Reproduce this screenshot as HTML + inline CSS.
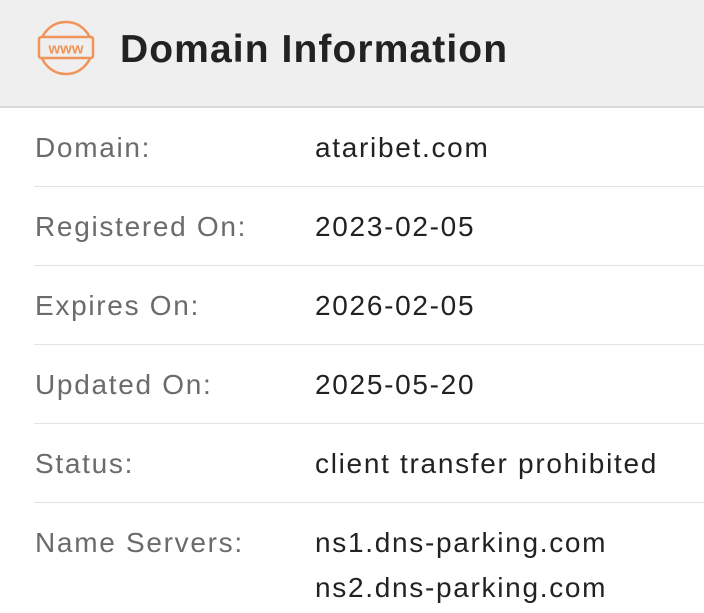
<!DOCTYPE html>
<html><head><style>
body{margin:0;width:704px;height:610px;overflow:hidden;background:#fff;font-family:"Liberation Sans",sans-serif;}
.hd{position:absolute;left:0;top:0;width:704px;height:106px;background:#efefef;border-bottom:2px solid #d9d9d9;}
.hd h1{position:absolute;left:120px;top:28px;margin:0;font-size:39px;font-weight:bold;color:#222;letter-spacing:1.1px;}
.row{position:absolute;left:34px;right:0;height:78px;border-bottom:1.5px solid #e3e3e3;font-size:28px;letter-spacing:1.7px;}
.row .l{position:absolute;left:1px;top:23px;color:#6b6b6b;line-height:34px;}
.row .v{position:absolute;left:281px;top:23px;color:#222;line-height:34px;}
.row .v2{line-height:45px;top:17px;}
</style></head><body>
<div class="hd">
<svg style="position:absolute;left:36px;top:19px" width="60" height="58" viewBox="0 0 60 58">
<g fill="none" stroke="#f0945a" stroke-width="2.5">
<circle cx="30" cy="29" r="26"/>
<rect x="3" y="18" width="54" height="21" rx="2" fill="#efefef"/>
</g>
<text x="30" y="34.5" font-family="Liberation Sans" font-weight="bold" font-size="15" fill="#f0945a" text-anchor="middle">www</text>
</svg>
<h1>Domain Information</h1>
</div>
<div class="row" style="top:108px"><span class="l">Domain:</span><span class="v">ataribet.com</span></div>
<div class="row" style="top:187px"><span class="l">Registered On:</span><span class="v">2023-02-05</span></div>
<div class="row" style="top:266px"><span class="l">Expires On:</span><span class="v">2026-02-05</span></div>
<div class="row" style="top:345px"><span class="l">Updated On:</span><span class="v">2025-05-20</span></div>
<div class="row" style="top:424px"><span class="l">Status:</span><span class="v">client transfer prohibited</span></div>
<div class="row" style="top:503px;border:none;height:110px"><span class="l">Name Servers:</span><span class="v v2">ns1.dns-parking.com<br>ns2.dns-parking.com</span></div>
</body></html>
